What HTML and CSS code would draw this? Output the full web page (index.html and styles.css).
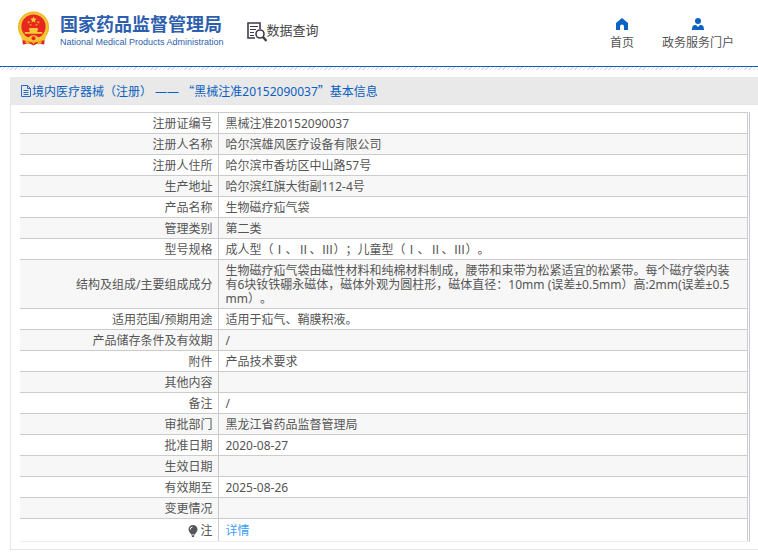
FILE: index.html
```html
<!doctype html>
<html lang="zh-CN">
<head>
    <meta charset="UTF-8">
    <meta name="viewport" content="width=device-width, initial-scale=1.0">
    <title>国家药品监督管理局数据查询</title>
    <link rel="stylesheet" href="styles.css">
</head>
<body>
<header class="header">
    <div class="logo">
        <svg class="emblem" viewBox="0 0 34 36" aria-hidden="true">
            <path d="M5 23h24l-1 11-7-1-4 2-4-2-7 1z" fill="#d9231d"/>
            <circle cx="17" cy="16" r="16" fill="#f5c433"/>
            <circle cx="17" cy="16" r="15.300" fill="none" stroke="#e9a92c" stroke-width="1" stroke-dasharray="2 1"/>
            <circle cx="17" cy="15.500" r="12.500" fill="#e6261f"/>
            <path d="M17 5l1 2.200 2.400.2-1.800 1.600.5 2.400-2.100-1.200-2.100 1.200.5-2.400-1.800-1.600 2.400-.2z" fill="#f8c838"/>
            <path d="M11 10h2v2h-2zM21 10h2v2h-2zM13 13h2v1.500h-2zM19 13h2v1.500h-2z" fill="#f0a02c"/>
            <path d="M13 17h8l1 2h-1v2h5v2H8v-2h5v-2h-1z" fill="#f8c838"/>
            <path d="M4 24c4 4 7 3 9 2 2-2 6-2 8 0 2 1 5 2 9-2l-1 5c-3 2-6 1-8 0-2 2-6 2-8 0-2 1-5 2-8 0z" fill="#f5c433"/>
            <circle cx="17" cy="27.500" r="2" fill="#e6261f"/>
            <path d="M8 31l4-1 1 4-4-1zM22 30l4 1-1 2-4 1zM15 31h4l-2 3z" fill="#f0a92c"/>
        </svg>
        <div>
            <div class="logo-name">国家药品监督管理局</div>
            <div class="logo-en">National Medical Products Administration</div>
        </div>
    </div>
    <div class="search-title">
        <svg class="search-icon" viewBox="0 0 20 20" fill="none" stroke="#3d3d4a" aria-hidden="true">
            <path d="M8 16H1V1h12v6" stroke-width="1.600"/>
            <path d="M3 4.500h8M3 7.500h6M3 10.500h4M3 13.500h4" stroke-width="1"/>
            <circle cx="13" cy="12" r="4" stroke-width="1.600"/>
            <path d="M16 15l3.500 4" stroke-width="2.400"/>
        </svg>
        <span>数据查询</span>
    </div>
    <nav class="nav">
        <a href="#">
            <svg viewBox="0 0 12 12" aria-hidden="true"><path d="M6 0l6 5v7H8V8.500a2 2 0 0 0-4 0V12H0V5z"/></svg>
            首页
        </a>
        <a href="#">
            <svg viewBox="0 0 12 12" aria-hidden="true"><circle cx="6" cy="3" r="3"/><path d="M0 12c0-4 1-5 4-5l2 2 2-2c3 0 4 1 4 5z"/></svg>
            政务服务门户
        </a>
    </nav>
</header>
<main class="panel">
    <h1 class="panel-title">
        <svg class="doc-icon" viewBox="0 0 10 12" fill="none" stroke="#2a6cc8" aria-hidden="true">
            <path d="M.5.500h6l3 3v8h-9zM6.500.500v3h3M2.500 5.500h5M2.500 7.500h5M2.500 9.500h5"/>
        </svg>
        <span>境内医疗器械（注册） —— <span class="cjk">“</span>黑械注准20152090037<span class="cjk">”</span>基本信息</span>
    </h1>
    <div class="panel-body">
        <div class="table-wrap">
            <table class="info">
                <tr><th scope="row">注册证编号</th><td>黑械注准20152090037</td></tr>
                <tr><th scope="row">注册人名称</th><td>哈尔滨雄风医疗设备有限公司</td></tr>
                <tr><th scope="row">注册人住所</th><td>哈尔滨市香坊区中山路57号</td></tr>
                <tr><th scope="row">生产地址</th><td>哈尔滨红旗大街副112-4号</td></tr>
                <tr><th scope="row">产品名称</th><td>生物磁疗疝气袋</td></tr>
                <tr><th scope="row">管理类别</th><td>第二类</td></tr>
                <tr><th scope="row">型号规格</th><td>成人型（Ⅰ、Ⅱ、Ⅲ）；儿童型（Ⅰ、Ⅱ、Ⅲ）。</td></tr>
                <tr><th scope="row">结构及组成/主要组成成分</th><td>生物磁疗疝气袋由磁性材料和纯棉材料制成，腰带和束带为松紧适宜的松紧带。每个磁疗袋内装有6块钕铁硼永磁体，磁体外观为圆柱形，磁体直径：10mm (误差±0.5mm）高:2mm(误差±0.5mm）。</td></tr>
                <tr><th scope="row">适用范围/预期用途</th><td>适用于疝气、鞘膜积液。</td></tr>
                <tr><th scope="row">产品储存条件及有效期</th><td>/</td></tr>
                <tr><th scope="row">附件</th><td>产品技术要求</td></tr>
                <tr><th scope="row">其他内容</th><td></td></tr>
                <tr><th scope="row">备注</th><td>/</td></tr>
                <tr><th scope="row">审批部门</th><td>黑龙江省药品监督管理局</td></tr>
                <tr><th scope="row">批准日期</th><td>2020-08-27</td></tr>
                <tr><th scope="row">生效日期</th><td></td></tr>
                <tr><th scope="row">有效期至</th><td>2025-08-26</td></tr>
                <tr><th scope="row">变更情况</th><td></td></tr>
                <tr class="note">
                    <th scope="row"><svg class="bulb" viewBox="0 0 10 12" aria-hidden="true"><path d="M5 0a4.500 4.500 0 0 1 4.500 4.500C9.500 7 7.500 7.500 7 9.500H3C2.500 7.500.5 7 .5 4.500A4.500 4.500 0 0 1 5 0zM3.500 10.300h3L6 12H4z" fill="#55565a"/><path d="M2.300 4.500A2.500 2.500 0 0 1 4.500 2" stroke="#fff" fill="none"/></svg>注</th>
                    <td><a href="#">详情</a></td>
                </tr>
            </table>
        </div>
    </div>
</main>
</body>
</html>
```
FILE: styles.css
```css
* {
    box-sizing: border-box;
}
body {
    margin: 0;
    background-color: #fff;
    color: #555;
    font-family: "Noto Sans", "Noto Sans CJK SC", sans-serif;
    font-size: 12px;
    line-height: 14px;
    text-spacing-trim: space-all;
}
.cjk {
    font-family: "Noto Sans CJK SC", sans-serif;
}
.header {
    display: flex;
    align-items: flex-start;
    height: 70px;
    padding: 0 24px 0 17px;
    /* blue rule with a fine hatched strip under it */
    background:
        linear-gradient(#0a63c4, #0a63c4) 0 66px / 100% 1px no-repeat,
        repeating-linear-gradient(135deg, #ddd 0, #ddd 1px, #fff 1px, #fff 3px) 0 67px / 100% 3px no-repeat;
}
.logo {
    display: flex;
    gap: 10px;
    padding-top: 11px;
    color: #2e5fae;
}
.emblem {
    flex: none;
    width: 33px;
    height: 36px;
}
.logo-name {
    font-size: 18px;
    font-weight: bold;
    line-height: 26px;
    white-space: nowrap;
}
.logo-en {
    font-family: "Liberation Sans", Arial, sans-serif;
    font-size: 9px;
    line-height: 11px;
    white-space: nowrap;
}
.search-title {
    display: flex;
    margin-left: 23px;
    padding-top: 20px;
    color: #444;
    font-size: 13px;
    line-height: 20px;
    white-space: nowrap;
}
.search-icon {
    width: 20px;
    height: 20px;
    margin-top: 2px;
}
.nav {
    display: flex;
    gap: 28px;
    margin-left: auto;
    padding-top: 18px;
}
.nav a {
    display: flex;
    flex-direction: column;
    align-items: center;
    gap: 6px;
    color: #555;
    text-decoration: none;
    white-space: nowrap;
}
.nav svg {
    width: 12px;
    height: 12px;
    fill: #0a63c4;
}
.panel {
    margin: 7px 0 8px 10px;
    border-left: 1px solid #e6e6ea;
    border-bottom: 1px solid #e6e6ea;
}
.panel-title {
    display: flex;
    align-items: center;
    gap: 1px;
    height: 28px;
    margin: 0;
    padding: 1px 0 0 10px;
    border-bottom: 1px solid #e6e6f0;
    background-color: #e9e9e9;
    color: #0a5fc0;
    font-size: 12px;
    font-weight: normal;
}
.doc-icon {
    width: 10px;
    height: 12px;
}
.panel-body {
    padding: 7px 8px 7px 9px;
}
.table-wrap {
    padding-right: 1px;
    border-right: 1px solid #c8c8d2;
}
.info {
    width: 100%;
    border-collapse: collapse;
    border-right: 1px solid #ccc;
}
.info th,
.info td {
    height: 21px;
    padding: 4px 6px 2px;
    border-top: 1px solid #ccc;
    word-break: break-all;
}
.info td {
    padding-right: 10px;
    padding-left: 7px;
}
.info th {
    width: 198px;
    padding-right: 5px;
    border-right: 1px solid #ccc;
    font-weight: normal;
    text-align: right;
}
.info tr:nth-child(even) {
    background-color: #f7f7f7;
}
.info .note th,
.info .note td {
    height: 23px;
    border-bottom: 1px solid #eee;
}
.info a {
    color: #409eff;
    text-decoration: none;
}
.bulb {
    width: 10px;
    height: 12px;
    margin-right: 2px;
    vertical-align: -2px;
}
```
